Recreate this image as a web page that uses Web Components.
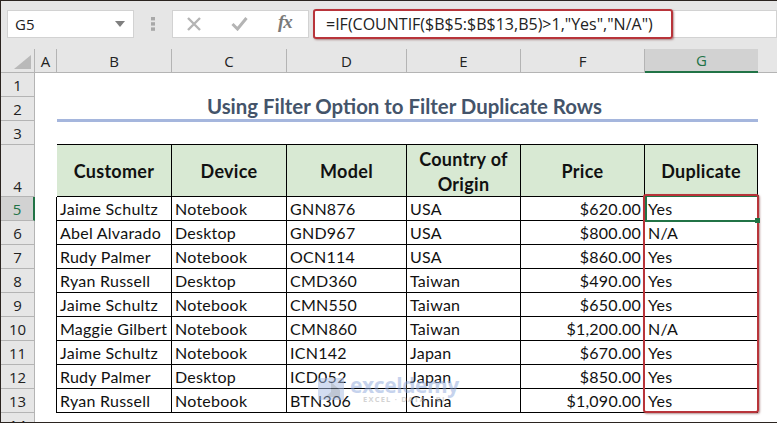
<!DOCTYPE html>
<html>
<head>
<meta charset="utf-8">
<title>Filter Duplicate Rows</title>
<style>
  html, body { margin: 0; padding: 0; background: #fff; }
  body { width: 777px; height: 423px; overflow: hidden; }
</style>
</head>
<body>
<excel-window>
  <formula-bar slot="bar" cell="G5">=IF(COUNTIF($B$5:$B$13,B5)&gt;1,"Yes","N/A")</formula-bar>
  <work-sheet slot="sheet"></work-sheet>
</excel-window>

<script>
class ExcelWindow extends HTMLElement {
  constructor() {
    super();
    const shadow = this.attachShadow({mode: 'open'});
    shadow.innerHTML = `
    <style>
      :host {
        display: flex;
        flex-direction: column;
        width: 777px;
        height: 423px;
        box-sizing: border-box;
        border-top: 1px solid #2b2420;
        border-left: 1px solid #2b2420;
        border-bottom: 1px solid #2b2420;
        overflow: hidden;
      }
    </style>
    <slot name="bar"></slot>
    <slot name="sheet"></slot>
    `;
  }
}

class FormulaBar extends HTMLElement {
  constructor() {
    super();
    const shadow = this.attachShadow({mode: 'open'});
    shadow.innerHTML = `
    <style>
      :host {
        display: flex;
        align-items: center;
        height: 48px;
        padding: 0 0 0 6px;
        box-sizing: border-box;
        background: #e6e6e6;
        font-family: "Open Sans", "Noto Sans", sans-serif;
        color: #222;
      }
      .box { background: #fff; border: 1px solid #d2d2d2; height: 28px; box-sizing: border-box; margin-top: -3px; }
      .name { width: 127px; display: flex; align-items: center; justify-content: space-between; padding: 0 8px 0 7px; font-size: 15px; }
      .name svg { display: block; }
      .dots { width: 38px; display: flex; justify-content: center; margin-top: -3px; }
      .fn { width: 137px; display: flex; align-items: center; padding-left: 13px; }
      .fn svg { display: block; flex: none; }
      .fn .fx { font: italic bold 19px/22px "Liberation Serif", serif; color: #7a7a7a; margin: -3px 0 0 30px; letter-spacing: -1px; }
      .input { flex: 1; margin-left: 4px; position: relative; display: flex; align-items: center; padding-left: 12px; font-size: 16px; white-space: nowrap; }
      .input::after {
        content: "";
        position: absolute;
        left: -1px; top: -2px;
        width: 360px; height: 30px;
        box-sizing: border-box;
        border: 2px solid #b8343a;
        border-radius: 3px;
        box-shadow: 1px 1px 2px rgba(120, 60, 60, .55);
      }
    </style>
    <div class="box name"><span id="cell"></span>
      <svg width="10" height="6" viewBox="0 0 10 6"><path d="M0 0H10L5 6Z" fill="#7f7f7f"/></svg>
    </div>
    <div class="dots">
      <svg width="4" height="14" viewBox="0 0 4 14" fill="#a8a8a8"><rect width="4" height="3.4"/><rect y="5.2" width="4" height="3.4"/><rect y="10.4" width="4" height="3.4"/></svg>
    </div>
    <div class="box fn">
      <svg width="16" height="16" viewBox="0 0 16 16"><path d="M2 2L14 14M14 2L2 14" stroke="#b4b4b4" stroke-width="2.4" fill="none"/></svg>
      <svg style="margin-left:29px" width="17" height="15" viewBox="0 0 17 15"><path d="M1.5 8L6.5 13L15.5 2" stroke="#b4b4b4" stroke-width="3" fill="none"/></svg>
      <span class="fx">fx</span>
    </div>
    <div class="box input"><slot></slot></div>
    `;
    shadow.getElementById('cell').textContent = this.getAttribute('cell');
  }
}

class SheetWatermark extends HTMLElement {
  constructor() {
    super();
    const shadow = this.attachShadow({mode: 'open'});
    shadow.innerHTML = `
    <style>
      :host {
        position: absolute;
        left: 316px;
        top: 326px;
        width: 150px;
        height: 34px;
        display: flex;
        opacity: .5;
        pointer-events: none;
      }
      svg { flex: none; display: block; margin-top: 2px; }
      .txt { margin-left: 5px; display: flex; flex-direction: column; align-items: center; }
      .big { font: bold 21px/20px "Open Sans", sans-serif; color: #8ea9dc; letter-spacing: -.4px; }
      .small { font: bold 7.5px/9px "Open Sans", sans-serif; color: #a9a9a9; letter-spacing: 1.2px; white-space: nowrap; }
    </style>
    <svg width="28" height="24" viewBox="0 0 28 24"><path d="M1 1H27V23H1Z" fill="#a9bde4"/><path d="M14 5L23 13V20H8L14 15Z" fill="#7f8fa8"/></svg>
    <div class="txt"><span class="big">exceldemy</span><span class="small">EXCEL · DATA · BI</span></div>
    `;
  }
}

const COLS = ['A', 'B', 'C', 'D', 'E', 'F', 'G'];
const HEADS = ['Customer', 'Device', 'Model', 'Country of Origin', 'Price', 'Duplicate'];
const ROWS = [
  ['Jaime Schultz', 'Notebook', 'GNN876', 'USA', '$620.00', 'Yes'],
  ['Abel Alvarado', 'Desktop', 'GND967', 'USA', '$800.00', 'N/A'],
  ['Rudy Palmer', 'Notebook', 'OCN114', 'USA', '$860.00', 'Yes'],
  ['Ryan Russell', 'Desktop', 'CMD360', 'Taiwan', '$490.00', 'Yes'],
  ['Jaime Schultz', 'Notebook', 'CMN550', 'Taiwan', '$650.00', 'Yes'],
  ['Maggie Gilbert', 'Notebook', 'CMN860', 'Taiwan', '$1,200.00', 'N/A'],
  ['Jaime Schultz', 'Notebook', 'ICN142', 'Japan', '$670.00', 'Yes'],
  ['Rudy Palmer', 'Desktop', 'ICD052', 'Japan', '$850.00', 'Yes'],
  ['Ryan Russell', 'Notebook', 'BTN306', 'China', '$1,090.00', 'Yes']
];

class WorkSheet extends HTMLElement {
  constructor() {
    super();
    const shadow = this.attachShadow({mode: 'open'});

    let cells = `<div class="corner"><svg width="17" height="14" viewBox="0 0 17 14"><path d="M17 0V14H0Z" fill="#b9b9b9"/></svg></div>`;
    COLS.forEach(c => {
      cells += `<div class="ch${c === 'G' ? ' on' : ''}">${c}</div>`;
    });
    cells += `<div class="ch rest"></div>`;

    // rows 1 to 3 hold only the title
    cells += `<div class="rh">1</div><div class="blank" style="grid-column: 2 / -1"></div>`;
    cells += `<div class="rh">2</div><div></div><div class="title">Using Filter Option to Filter Duplicate Rows</div><div></div>`;
    cells += `<div class="rh">3</div><div class="blank" style="grid-column: 2 / -1"></div>`;

    cells += `<div class="rh tall">4</div><div></div>`;
    HEADS.forEach(h => { cells += `<div class="td th">${h}</div>`; });
    cells += `<div></div>`;

    ROWS.forEach((row, i) => {
      cells += `<div class="rh${i === 0 ? ' on' : ''}">${i + 5}</div><div></div>`;
      row.forEach((v, j) => {
        cells += `<div class="td${j === 0 ? ' first' : ''}${j === 4 ? ' num' : ''}">${v}</div>`;
      });
      cells += `<div></div>`;
    });
    cells += `<div class="rh">14</div><div style="grid-column: 2 / -1"></div>`;

    shadow.innerHTML = `
    <style>
      :host {
        display: block;
        position: relative;
        flex: 1;
        overflow: hidden;
        background: #fff;
      }
      .grid {
        display: grid;
        grid-template-columns: 34px 22px 115px 115px 120px 114px 124px 113px 19px;
        grid-template-rows: 24px 24px 24px 24px 52px repeat(9, 24px) 24px;
        font-family: Lato, "Open Sans", sans-serif;
        font-size: 16px;
        letter-spacing: .25px;
        color: #111;
      }
      .corner, .ch, .rh {
        background: #e6e6e6;
        box-sizing: border-box;
        font-family: "Open Sans", sans-serif;
        font-size: 15px;
        letter-spacing: 0;
        color: #222;
      }
      .corner { display: flex; align-items: flex-end; justify-content: flex-end; padding: 0 3px 3px 0; border-right: 1px solid #b4b4b4; border-bottom: 1px solid #b4b4b4; }
      .corner svg { display: block; }
      .ch { display: flex; align-items: center; justify-content: center; border-right: 1px solid #b4b4b4; border-bottom: 1px solid #b4b4b4; }
      .ch.rest { border-right: 0; }
      .ch.on { background: #d2d2d2; color: #217346; border-bottom: 2px solid #217346; border-right: 0; }
      .rh { display: flex; align-items: center; justify-content: center; border-right: 1px solid #b4b4b4; border-bottom: 1px solid #b4b4b4; }
      .rh.tall { align-items: flex-end; padding-bottom: 0; }
      .rh.on { background: #d2d2d2; color: #217346; border-right: 2px solid #217346; }
      .title {
        grid-column: span 6;
        border-bottom: 3px solid #a5b6dd;
        box-sizing: border-box;
        height: 25px;
        padding-right: 6px;
        text-align: center;
        font-weight: 700;
        font-size: 20.4px;
        letter-spacing: 0;
        line-height: 19px;
        color: #44546a;
        white-space: nowrap;
      }
      .td {
        box-sizing: border-box;
        border-right: 1px solid #000;
        border-bottom: 1px solid #000;
        padding: 0 3px;
        display: flex;
        align-items: center;
        white-space: nowrap;
      }
      .td.first { box-shadow: -1px 0 0 #000; }
      .td.num { justify-content: flex-end; }
      .th {
        background: #d8e9d3;
        box-shadow: 0 -1px 0 #000;
        justify-content: center;
        text-align: center;
        font-weight: 700;
        font-size: 18px;
        letter-spacing: .3px;
        line-height: 25px;
        white-space: normal;
        padding: 2px 8px 0;
      }
      .active {
        position: absolute;
        left: 644px;
        top: 146px;
        width: 114px;
        height: 27px;
        box-sizing: border-box;
        border: 2px solid #217346;
        pointer-events: none;
      }
      .handle {
        position: absolute;
        left: 754px;
        top: 169px;
        width: 5px;
        height: 5px;
        background: #217346;
        pointer-events: none;
      }
      .mark {
        position: absolute;
        left: 642px;
        top: 145px;
        width: 116px;
        height: 219px;
        box-sizing: border-box;
        border: 2px solid #b8343a;
        border-radius: 3px;
        box-shadow: 1px 1px 2px rgba(120, 60, 60, .55);
        pointer-events: none;
      }
    </style>
    <div class="grid">${cells}</div>
    <div class="active"></div>
    <div class="mark"></div>
    <div class="handle"></div>
    <sheet-watermark></sheet-watermark>
    `;
  }
}

window.customElements.define('sheet-watermark', SheetWatermark);
window.customElements.define('excel-window', ExcelWindow);
window.customElements.define('formula-bar', FormulaBar);
window.customElements.define('work-sheet', WorkSheet);
</script>
</body>
</html>
